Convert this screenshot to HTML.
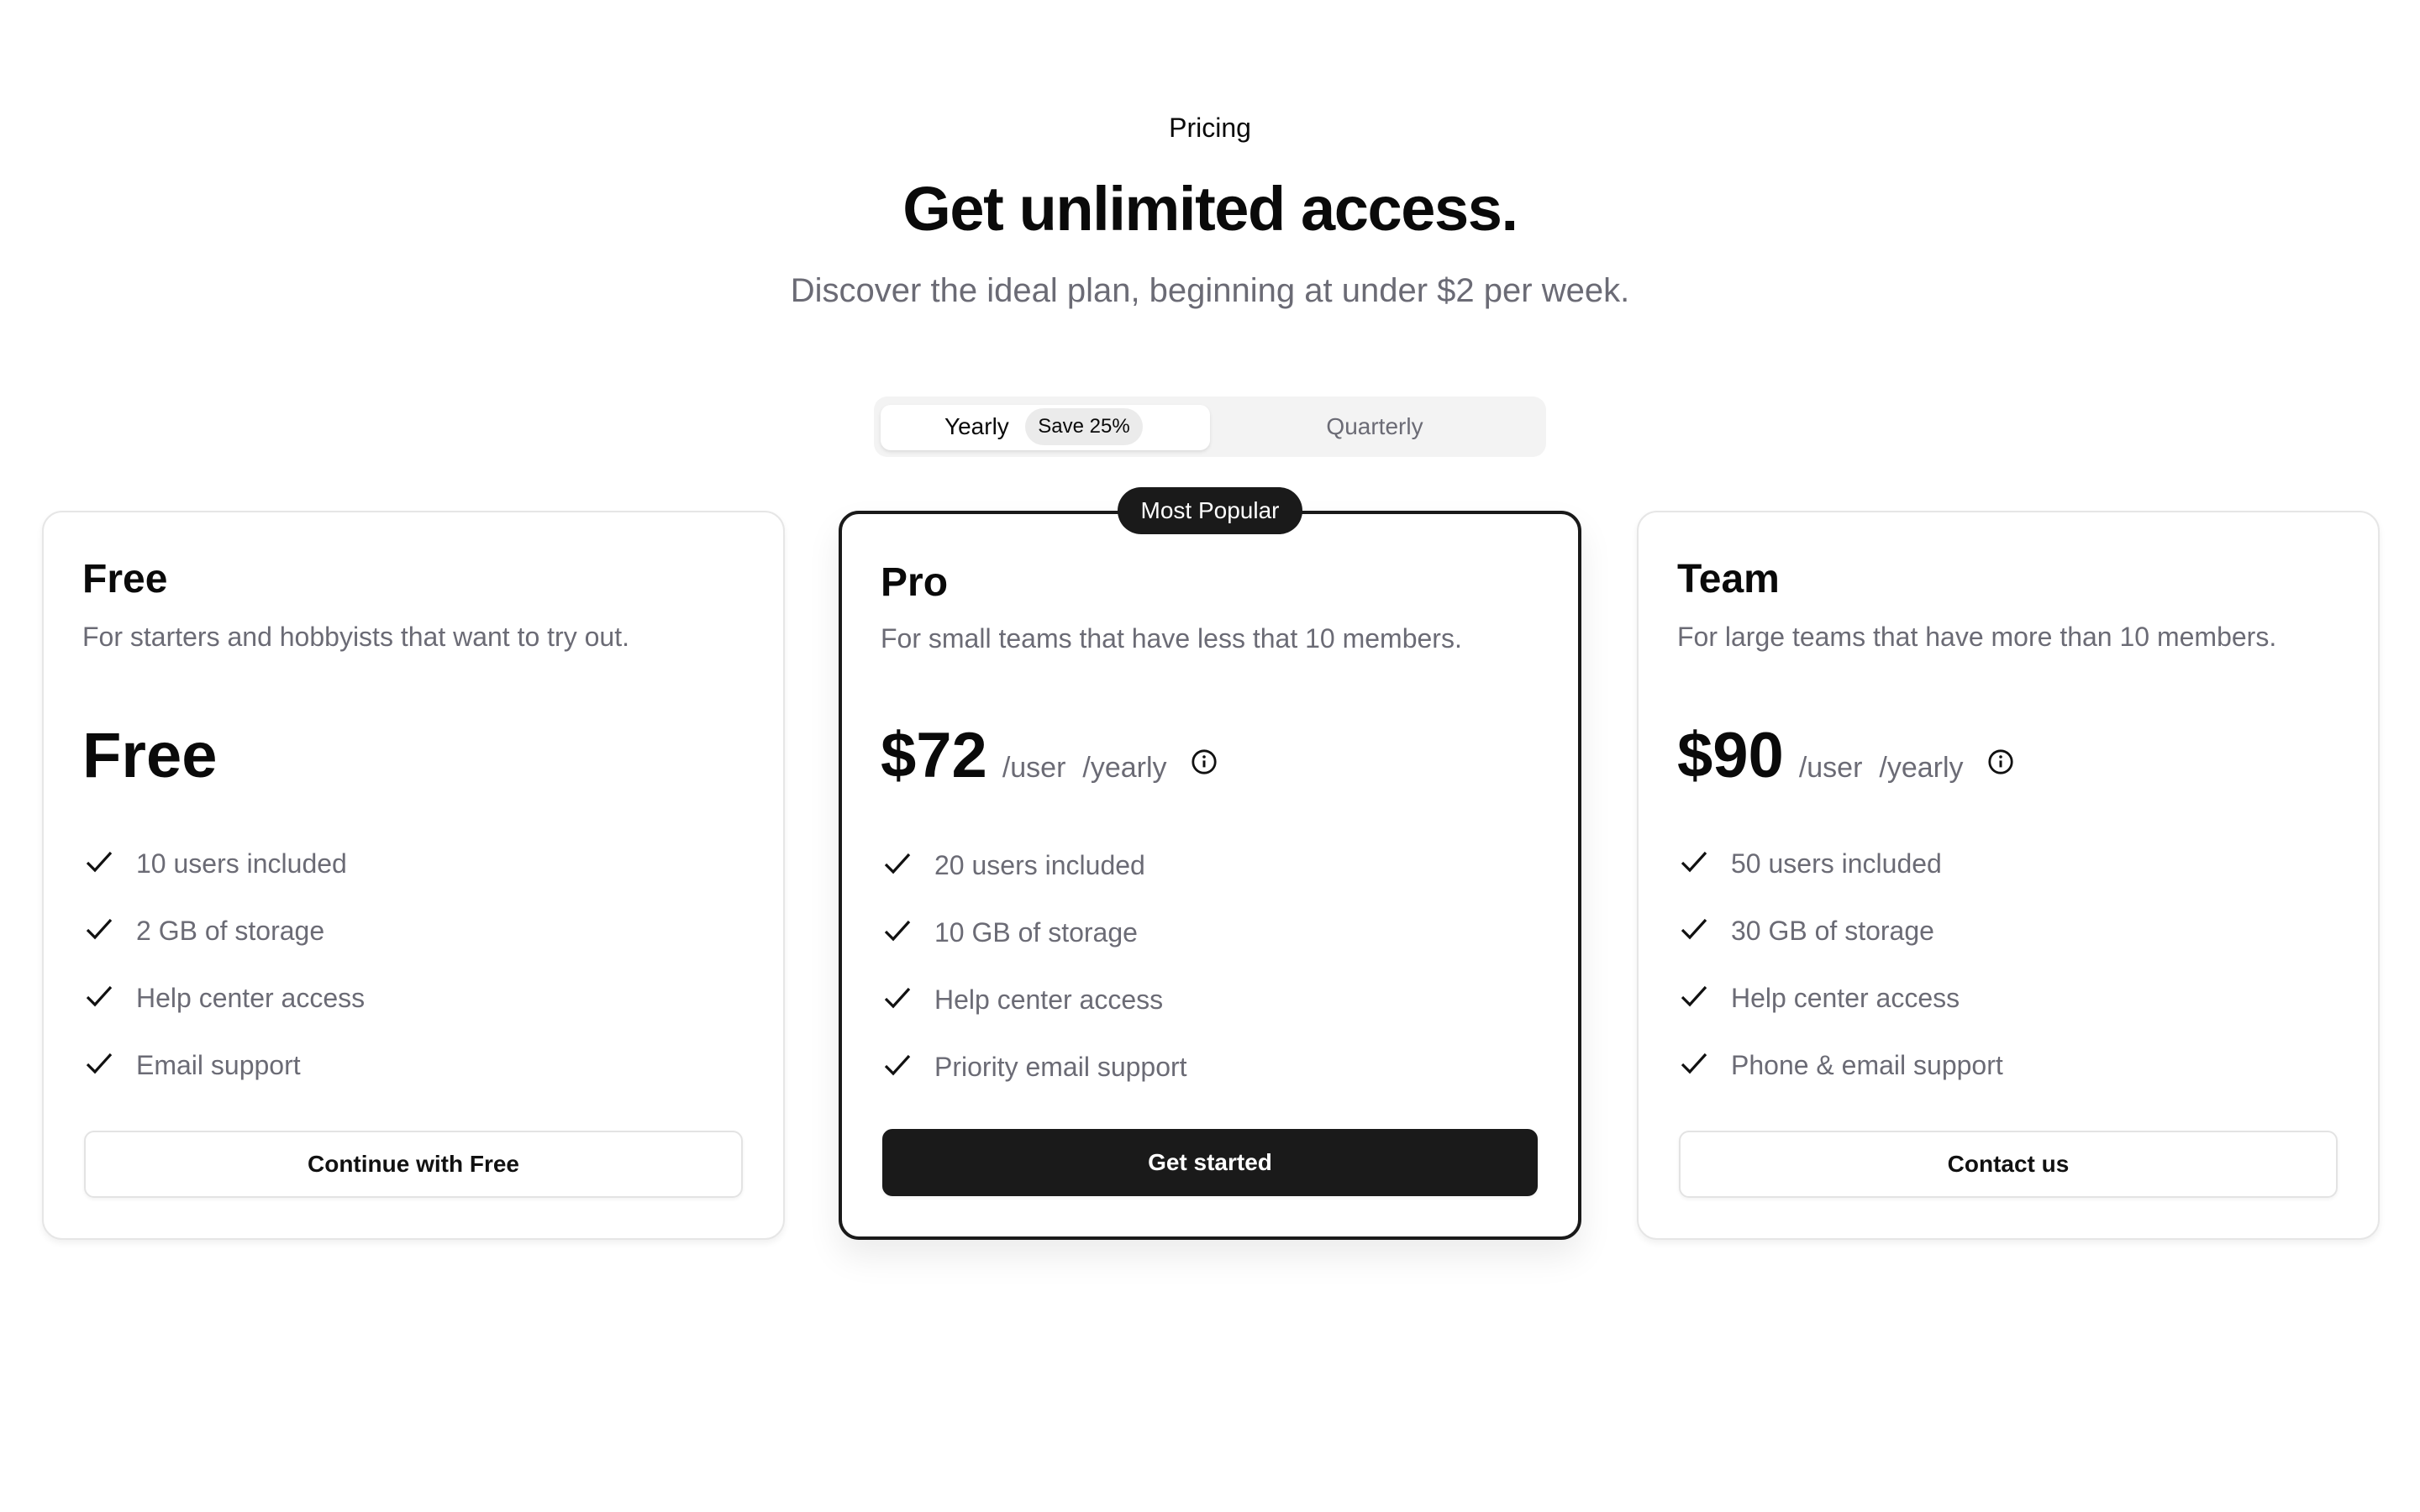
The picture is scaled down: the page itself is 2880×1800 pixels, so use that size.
<!DOCTYPE html>
<html><head><meta charset="utf-8"><style>
html,body{margin:0;padding:0;background:#fff}
body{width:2880px;height:1800px;overflow:hidden}
#r{zoom:2;width:1440px;height:900px;position:relative;font-family:"Liberation Sans",sans-serif;color:#0a0a0a}
.a{position:absolute}
.c{text-align:center;left:0;width:1440px}
.card{position:absolute;top:304px;width:442px;height:434px;box-sizing:border-box;border:1px solid #e6e6e6;border-radius:12px;background:#fff;box-shadow:0 2px 4px rgba(0,0,0,.06)}
.pro{border:2px solid #1a1a1a;box-shadow:0 10px 20px rgba(0,0,0,.08)}
.t{position:absolute;left:23px;font-size:24px;font-weight:bold;line-height:28px;top:26px}
.d{position:absolute;left:23px;font-size:16px;color:#6b6b75;line-height:20px;top:64px}
.p{position:absolute;left:23px;top:123px;font-size:38px;font-weight:bold;line-height:44px;white-space:nowrap}
.p span{font-size:17px;font-weight:normal;color:#6b6b75;margin-left:9px}
.p svg{margin-left:14px;vertical-align:1px}
ul{list-style:none;margin:0;padding:0;position:absolute;left:24px;top:197px}
li{height:40px;font-size:16px;color:#6b6b75;line-height:24px;position:relative;padding-left:31px}
li svg{position:absolute;left:0;top:2px}
.b{position:absolute;left:24px;right:24px;top:368px;height:40px;box-sizing:border-box;border:1px solid #e3e3e3;border-radius:6px;text-align:center;line-height:38px;font-size:14px;font-weight:bold;color:#111;box-shadow:0 1px 2px rgba(0,0,0,.05)}
</style></head><body><div id="r">
<div class="a c" style="top:67px;font-size:16px">Pricing</div>
<div class="a c" style="top:103px;font-size:37px;font-weight:bold;letter-spacing:-0.7px">Get unlimited access.</div>
<div class="a c" style="top:162px;font-size:20px;color:#6b6b75">Discover the ideal plan, beginning at under $2 per week.</div>
<div class="a" style="left:520px;top:236px;width:400px;height:36px;background:#f3f3f3;border-radius:8px"></div>
<div class="a" style="left:524px;top:241px;width:196px;height:27px;background:#fff;border-radius:6px;box-shadow:0 1px 2px rgba(0,0,0,.1)"></div>
<div class="a" style="left:562px;top:246px;font-size:14px;line-height:16px">Yearly</div>
<div class="a" style="left:610px;top:243px;width:70px;height:22px;background:#ebebeb;border-radius:11px;font-size:12px;line-height:22px;text-align:center">Save 25%</div>
<div class="a" style="left:720px;top:246px;width:196px;text-align:center;font-size:14px;line-height:16px;color:#6b6b75">Quarterly</div>

<svg width="0" height="0" style="position:absolute"><defs><symbol id="ck" viewBox="0 0 18 18"><path d="M2 9.5l4.5 4.5L16 3.5" fill="none" stroke="#111" stroke-width="1.6"/></symbol><symbol id="inf" viewBox="0 0 16 16"><circle cx="8" cy="8" r="6.6" fill="none" stroke="#111" stroke-width="1.4"/><path d="M8 7.2v4" stroke="#111" stroke-width="1.5"/><circle cx="8" cy="5" r=".9" fill="#111"/></symbol></defs></svg>

<div class="card" style="left:25px">
<div class="t">Free</div>
<div class="d">For starters and hobbyists that want to try out.</div>
<div class="p">Free</div>
<ul><li><svg width="18" height="18"><use href="#ck"/></svg>10 users included</li><li><svg width="18" height="18"><use href="#ck"/></svg>2 GB of storage</li><li><svg width="18" height="18"><use href="#ck"/></svg>Help center access</li><li><svg width="18" height="18"><use href="#ck"/></svg>Email support</li></ul>
<div class="b">Continue with Free</div>
</div>

<div class="card pro" style="left:499px">
<div class="t" style="top:27px">Pro</div>
<div class="d" style="top:64px">For small teams that have less that 10 members.</div>
<div class="p" style="top:122px">$72<span>/user</span><span style="margin-left:10px">/yearly</span><svg width="16" height="16"><use href="#inf"/></svg></div>
<ul style="top:197px"><li><svg width="18" height="18"><use href="#ck"/></svg>20 users included</li><li><svg width="18" height="18"><use href="#ck"/></svg>10 GB of storage</li><li><svg width="18" height="18"><use href="#ck"/></svg>Help center access</li><li><svg width="18" height="18"><use href="#ck"/></svg>Priority email support</li></ul>
<div class="b" style="top:366px;background:#1a1a1a;color:#fff;border-color:#1a1a1a">Get started</div>
</div>
<div class="a" style="left:665px;top:290px;width:110px;height:28px;border-radius:14px;background:#1a1a1a;color:#fff;font-size:14px;line-height:28px;text-align:center">Most Popular</div>

<div class="card" style="left:974px">
<div class="t">Team</div>
<div class="d">For large teams that have more than 10 members.</div>
<div class="p">$90<span>/user</span><span style="margin-left:10px">/yearly</span><svg width="16" height="16"><use href="#inf"/></svg></div>
<ul><li><svg width="18" height="18"><use href="#ck"/></svg>50 users included</li><li><svg width="18" height="18"><use href="#ck"/></svg>30 GB of storage</li><li><svg width="18" height="18"><use href="#ck"/></svg>Help center access</li><li><svg width="18" height="18"><use href="#ck"/></svg>Phone &amp; email support</li></ul>
<div class="b">Contact us</div>
</div>
</div></body></html>
